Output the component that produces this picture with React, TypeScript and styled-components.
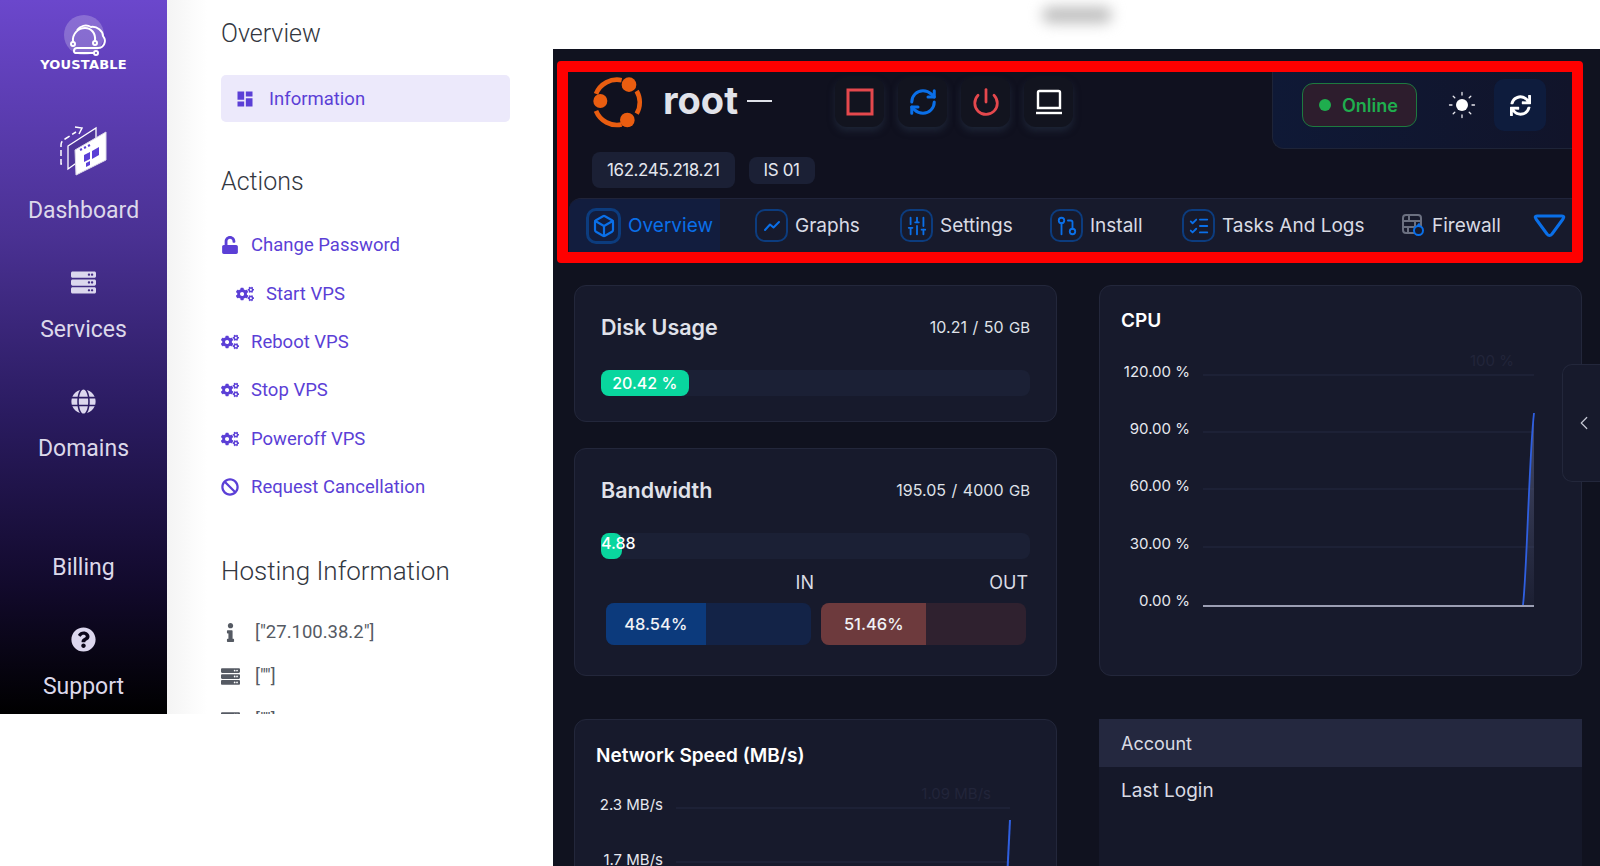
import styled, { createGlobalStyle } from 'styled-components';
import { ReactNode } from 'react';
import { Box, ChevronLeft, GitPullRequest, ListChecks, Power, RefreshCw, SlidersVertical } from 'lucide-react';
import { FaBan, FaCogs, FaGlobe, FaInfo, FaQuestionCircle, FaServer, FaSync, FaUnlock } from 'react-icons/fa';
import { MdDashboard } from 'react-icons/md';

const GlobalStyle = createGlobalStyle`
    html, body {
        margin: 0;
        padding: 0;
        background: #fff;
    }
    * {
        box-sizing: border-box;
    }
`

const Page = styled.div`
    display: flex;
    width: 1600px;
    height: 866px;
    overflow: hidden;
    position: relative;
    font-family: Roboto, "Liberation Sans", sans-serif;
`

const LeftArea = styled.div`
    display: flex;
    align-items: flex-start;
    width: 553px;
    flex-shrink: 0;
    height: 714px;
`

const Sidebar = styled.nav`
    width: 167px;
    height: 714px;
    flex-shrink: 0;
    display: flex;
    flex-direction: column;
    align-items: center;
    background: linear-gradient(180deg, #6b47cc 0%, #4a3193 33%, #2a1b60 58%, #120a2c 82%, #000 100%);
`

const LogoBlock = styled.div`
    height: 127px;
    width: 100%;
    display: flex;
    flex-direction: column;
    align-items: center;
    padding-top: 13px;
`

const LogoText = styled.div`
    font-family: "DejaVu Sans", sans-serif;
    font-weight: 700;
    font-size: 13px;
    line-height: 14px;
    color: #fff;
    letter-spacing: 0.2px;
    margin-top: 1px;
`

const NavList = styled.div`
    display: flex;
    flex-direction: column;
    align-items: center;
    gap: 45px;
`

const NavItem = styled.div`
    display: flex;
    flex-direction: column;
    align-items: center;
    gap: 22px;
`

const NavIcon = styled.div<{ $tall?: boolean }>`
    height: ${p => (p.$tall ? 48 : 24)}px;
    display: flex;
    align-items: center;
    justify-content: center;
    color: #dcd7ee;
    font-size: 25px;
`

const NavLabel = styled.div`
    font-size: 23px;
    line-height: 28px;
    color: #dcd8ea;
`

const InfoPanel = styled.div`
    flex: 1;
    height: 714px;
    overflow: hidden;
    padding: 19px 43px 0 54px;
    background: linear-gradient(90deg, #f4f4f4 0, #fff 40px);
`

const SectionTitle = styled.h3<{ $size?: number }>`
    margin: 0;
    height: 30px;
    line-height: 30px;
    font-weight: 300;
    font-size: ${p => p.$size || 25}px;
    color: #33373f;
`

const ActiveLink = styled.div`
    display: flex;
    align-items: center;
    height: 47px;
    margin: 26px 0 45px;
    padding-left: 14px;
    gap: 14px;
    border-radius: 5px;
    background: #ece9fb;
    color: #5b3fd6;
    font-size: 18.5px;
    svg {
        font-size: 20px;
    }
`

const ActionList = styled.div`
    margin: 24px 0 45px;
`

const ActionRow = styled.div<{ $indent?: boolean }>`
    display: flex;
    align-items: center;
    height: 48.4px;
    padding-left: ${p => (p.$indent ? 15 : 0)}px;
    color: #5b3fd6;
    font-size: 18.5px;
`

const ActionIcon = styled.span`
    width: 30px;
    display: flex;
    align-items: center;
    font-size: 18px;
`

const HostRows = styled.div`
    margin-top: 24px;
`

const HostRow = styled.div`
    display: flex;
    align-items: center;
    height: 44px;
    color: #555a63;
    font-size: 18.5px;
`

const HostIcon = styled.span`
    width: 34px;
    display: flex;
    justify-content: flex-start;
    padding-left: 0;
    font-size: 19px;
`

const Content = styled.div`
    flex: 1;
    display: flex;
    flex-direction: column;
    min-width: 0;
`

const TopStrip = styled.div`
    height: 49px;
    background: #fff;
    display: flex;
    justify-content: center;
    align-items: center;
    padding-bottom: 20px;
`

const BlurredName = styled.div`
    width: 70px;
    height: 16px;
    border-radius: 8px;
    background: #bdbdbd;
    filter: blur(7px);
`

const Main = styled.main`
    flex: 1;
    background: #10121f;
    padding: 12px 17px 0 4px;
    overflow: hidden;
`

const HeaderFrame = styled.header`
    border: 11px solid #ff0000;
    border-radius: 4px;
    height: 202px;
    overflow: hidden;
    background: #10111f;
    display: flex;
    flex-direction: column;
`

const TopRow = styled.div`
    height: 81px;
    display: flex;
    align-items: flex-start;
    padding-left: 24px;
`

const ServerLogo = styled.svg`
    width: 56px;
    height: 56px;
    margin-top: 3px;
    flex-shrink: 0;
`

const ServerName = styled.div`
    font-family: Inter, sans-serif;
    font-size: 38px;
    font-weight: 700;
    line-height: 56px;
    color: #e1e3ea;
    margin: 0 0 0 15px;
    width: 82px;
`

const Dash = styled.div`
    width: 25px;
    height: 2px;
    background: #dfe1e8;
    margin: 28px 63px 0 2px;
`

const ActionButtons = styled.div`
    display: flex;
    gap: 14px;
    margin-top: 5px;
`

const PowerButton = styled.button<{ $color: string }>`
    width: 49px;
    height: 50px;
    padding: 0;
    border: none;
    border-radius: 12px;
    background: #12141f;
    color: ${p => p.$color};
    box-shadow: 0 4px 7px rgba(40, 52, 72, 0.55);
    display: flex;
    align-items: center;
    justify-content: center;
`

const StatusWidget = styled.div`
    margin-left: auto;
    width: 300px;
    height: 77px;
    display: flex;
    align-items: center;
    padding: 0 0 10px 29px;
    border-left: 1px solid #1e2438;
    border-bottom: 1px solid #1e2438;
    border-bottom-left-radius: 12px;
    background: linear-gradient(90deg, #0f1936, #11142a);
`

const OnlinePill = styled.div`
    width: 115px;
    height: 44px;
    display: flex;
    align-items: center;
    gap: 11px;
    padding-left: 16px;
    border: 1px solid #1d7a3f;
    border-radius: 11px;
    background: #2d1d2d;
    font-family: Inter, sans-serif;
    font-size: 18px;
    font-weight: 600;
    color: #1fae4e;
`

const GreenDot = styled.span`
    width: 12px;
    height: 12px;
    border-radius: 50%;
    background: #1fae4e;
`

const SunIcon = styled.svg`
    width: 28px;
    height: 28px;
    margin: 0 18px 0 31px;
`

const RefreshButton = styled.div`
    width: 52px;
    height: 52px;
    border-radius: 10px;
    background: #0e1c3d;
    color: #fff;
    display: flex;
    align-items: center;
    justify-content: center;
    font-size: 21px;
`

const ChipRow = styled.div`
    height: 46px;
    display: flex;
    align-items: center;
    gap: 14px;
    padding: 0 0 10px 24px;
`

const Chip = styled.div<{ $small?: boolean }>`
    height: ${p => (p.$small ? 27 : 36)}px;
    padding: 0 15px;
    display: flex;
    align-items: center;
    border-radius: 8px;
    background: #1b2035;
    color: #e4e6ee;
    font-family: Inter, sans-serif;
    font-size: 17px;
    letter-spacing: -0.4px;
`

const TabBar = styled.div`
    height: 54px;
    margin-left: 1px;
    display: flex;
    align-items: center;
    border-top: 1px solid #20243a;
    border-top-left-radius: 12px;
    background: #171a2c;
    overflow: hidden;
`

const Tab = styled.div<{ $active?: boolean; $width: number }>`
    flex-shrink: 0;
    width: ${p => p.$width}px;
    height: 100%;
    display: flex;
    align-items: center;
    gap: 7px;
    padding-left: ${p => (p.$active ? 17 : 0)}px;
    background: ${p => (p.$active ? '#121d3e' : 'transparent')};
    color: ${p => (p.$active ? '#0a6fe8' : '#d9dbe4')};
    font-family: Inter, sans-serif;
    font-size: 19px;
`

const TabIcon = styled.span<{ $active?: boolean }>`
    width: ${p => (p.$active ? 35 : 33)}px;
    height: ${p => (p.$active ? 36 : 33)}px;
    flex-shrink: 0;
    display: flex;
    align-items: center;
    justify-content: center;
    border: ${p => (p.$active ? 3 : 2)}px solid #0c3c7e;
    border-radius: 10px;
    color: #0a6fe8;
`

const Dropdown = styled.svg`
    width: 33px;
    height: 24px;
    margin-left: 37px;
    flex-shrink: 0;
`

const Dashboard = styled.div`
    display: grid;
    grid-template-columns: 483px 483px;
    column-gap: 42px;
    row-gap: 43px;
    margin: 22px 0 0 17px;
`

const LeftStack = styled.div`
    display: flex;
    flex-direction: column;
    gap: 26px;
`

const Card = styled.section<{ $height?: number }>`
    height: ${p => (p.$height ? `${p.$height}px` : 'auto')};
    border: 1px solid #23273b;
    border-radius: 12px;
    background: #171a2c;
    color: #e2e4ec;
    font-family: Inter, sans-serif;
`

const MeterCard = styled(Card)`
    padding: 26px 26px 0;
`

const MeterHead = styled.div<{ $bottom: number }>`
    display: flex;
    justify-content: space-between;
    align-items: center;
    height: 30px;
    margin-bottom: ${p => p.$bottom}px;
`

const MeterTitle = styled.div`
    font-size: 21.5px;
    font-weight: 600;
    color: #e0e2ea;
`

const MeterValue = styled.div`
    font-size: 16px;
    color: #dfe1e8;
    word-spacing: 1px;
    small {
        font-size: 15px;
    }
`

const Track = styled.div`
    height: 26px;
    border-radius: 8px;
    background: #1b2035;
    display: flex;
`

const TrackFill = styled.div`
    height: 100%;
    flex-shrink: 0;
    border-radius: 8px;
    background: #09d69e;
    color: #fff;
    font-size: 16px;
    font-weight: 500;
    line-height: 20px;
    text-align: center;
`

const TinyFill = styled(TrackFill)`
    overflow: visible;
    width: 21px;
    text-align: left;
    white-space: nowrap;
`

const SplitLabels = styled.div`
    display: flex;
    height: 24px;
    margin-top: 12px;
    font-size: 18px;
    line-height: 24px;
    color: #d9dbe4;
`

const InLabel = styled.div`
    width: 213px;
    text-align: right;
`

const OutLabel = styled.div`
    width: 214px;
    text-align: right;
`

const SplitBars = styled.div`
    display: flex;
    gap: 10px;
    margin: 8px 0 0 5px;
`

const Split = styled.div<{ $base: string }>`
    width: 205px;
    height: 42px;
    border-radius: 8px;
    overflow: hidden;
    background: ${p => p.$base};
`

const SplitFill = styled.div<{ $color: string }>`
    height: 100%;
    display: flex;
    align-items: center;
    justify-content: center;
    background: ${p => p.$color};
    color: #f1f2f6;
    font-size: 16.5px;
    font-weight: 500;
`

const ChartTitle = styled.div<{ $left: number; $top: number; $height: number }>`
    padding: ${p => p.$top}px 0 0 ${p => p.$left}px;
    height: ${p => p.$height}px;
    font-size: 19px;
    line-height: 24px;
    font-weight: 600;
    color: #fff;
`

const ChartSvg = styled.svg`
    display: block;
    font-family: Inter, sans-serif;
    font-size: 15px;
`

const AccountCard = styled.section`
    background: #151829;
    font-family: Inter, sans-serif;
    height: 200px;
`

const AccountHead = styled.div`
    height: 48px;
    padding-left: 22px;
    display: flex;
    align-items: center;
    background: #24283f;
    color: #d9dbe4;
    font-size: 18px;
`

const AccountRow = styled.div`
    padding: 10px 0 0 22px;
    line-height: 28px;
    font-size: 19px;
    color: #d9dbe4;
`

const SideToggle = styled.div`
    position: absolute;
    right: 0;
    top: 364px;
    width: 38px;
    height: 118px;
    display: flex;
    align-items: center;
    padding-left: 10px;
    border: 1px solid #23273b;
    border-right: none;
    border-radius: 10px 0 0 10px;
    background: #171a2c;
    color: #c5c8d4;
`

function SidebarLogo() {
    return (
        <svg width="60" height="44" viewBox="44 13 60 44" fill="none" stroke="#fff" strokeWidth="2">
            <circle cx="74" cy="35" r="20" fill="rgba(255,255,255,0.22)" stroke="none" />
            <path d="M63 42C62 33 69 28 75 28C81 28 86 33 85 41" />
            <circle cx="63" cy="44" r="2" />
            <circle cx="85" cy="43" r="2" />
            <path d="M67 30C70 26 76 24 81 27C87 26 93 31 93 36C97 41 94 48 88 48H67C63 48 63 54 67 53H84" />
            <circle cx="86" cy="53" r="2" />
        </svg>
    );
}

function DashboardArt() {
    return (
        <svg width="50" height="50" viewBox="51 126 50 50" fill="none" stroke="#fff">
            <path d="M54 164H53V145Q53 141 57 139L68 132" strokeWidth="1.5" strokeDasharray="6 3" />
            <path d="M67 127L74 128L71 134" strokeWidth="1.5" />
            <path d="M60 146L88 128V149L60 169Z" strokeWidth="1.3" fill="#4f3699" />
            <path d="M67 150L98 132V160L68 175Z" fill="#fff" stroke="#dcd8ea" strokeWidth="1" />
            <path d="M72 150l2-1M76 148l2-1M80 146l2-1" stroke="#5b3fd6" strokeWidth="2" />
            <path d="M76 155l6-3v7l-6 3zM84 151l7-4v8l-7 4zM78 163l4-2v4l-4 2z" fill="#5b3fd6" stroke="none" />
        </svg>
    );
}

function UbuntuMark() {
    return (
        <ServerLogo viewBox="122 70 168 168" fill="#e95d10" stroke="none">
            <circle cx="233" cy="99" r="22" />
            <circle cx="147" cy="148" r="21" />
            <circle cx="228" cy="205" r="22" />
            <g fill="none" stroke="#e95d10" strokeWidth="14">
                <path d="M256 118A68 68 0 0 1 256 186" />
                <path d="M211 218.5A68 68 0 0 1 134 177.5" />
                <path d="M134 126.5A68 68 0 0 1 211 85.5" />
            </g>
        </ServerLogo>
    );
}

function Sun() {
    return (
        <SunIcon viewBox="0 0 28 28" stroke="#e8e8ee" strokeWidth="1.3" strokeLinecap="round">
            <circle cx="14" cy="14" r="6" fill="#fff" stroke="none" />
            <path d="M14 1.5v2.5M14 24v2.5M1.5 14H4M24 14h2.5M5.2 5.2l1.6 1.6M21.2 21.2l1.6 1.6M5.2 22.8l1.6-1.6M21.2 6.8l1.6-1.6" />
        </SunIcon>
    );
}

function FirewallIcon() {
    return (
        <svg width="23" height="23" viewBox="0 0 23 23" fill="none" style={{ flexShrink: 0 }}>
            <rect x="1" y="1" width="18" height="18" rx="3" stroke="#6b7080" strokeWidth="2" />
            <path d="M1 7H19M1 13H12M7 1V7M13 7V13M6 13V19" stroke="#6b7080" strokeWidth="2" />
            <circle cx="16.5" cy="16.5" r="4.5" fill="#171a2c" stroke="#0a6fe8" strokeWidth="2" />
            <path d="M15 12l2-2 1 3" stroke="#0a6fe8" strokeWidth="1.5" />
        </svg>
    );
}

function GraphIcon() {
    return (
        <svg width="18" height="18" viewBox="0 0 18 18" fill="none" stroke="#0a6fe8" strokeWidth="2" strokeLinecap="round" strokeLinejoin="round">
            <path d="M2 13L7 7.5L10.5 10.5L16 5" />
        </svg>
    );
}

function LaptopIcon() {
    return (
        <svg width="28" height="26" viewBox="0 0 28 26" fill="none" stroke="#fff" strokeWidth="2.4">
            <path d="M3 19V3.5Q3 2 4.500 2H23.500Q25 2 25 3.500V19Z" />
            <path d="M1 24H27" />
        </svg>
    );
}

function CpuChart() {
    const labels = [['120.00 %', 31], ['90.00 %', 88], ['60.00 %', 145], ['30.00 %', 203], ['0.00 %', 260]] as const;
    return (
        <ChartSvg width="481" height="300" viewBox="0 0 481 300">
            <defs>
                <linearGradient id="cpuArea" x1="0" y1="0" x2="0" y2="1">
                    <stop offset="0" stopColor="#4a5070" stopOpacity="0.9" />
                    <stop offset="1" stopColor="#4a5070" stopOpacity="0.1" />
                </linearGradient>
            </defs>
            <text x="414" y="20" textAnchor="end" fill="#22253a" fontSize="15">100 %</text>
            {[29, 86, 143, 201].map(y => (
                <line key={y} x1="103" x2="434" y1={y} y2={y} stroke="#252940" />
            ))}
            {labels.map(([text, y]) => (
                <text key={text} x="90" y={y} textAnchor="end" fill="#e6e8ef">{text}</text>
            ))}
            <path d="M423 259C427 225 429 110 434 67V259Z" fill="url(#cpuArea)" />
            <path d="M423 259C427 225 429 110 434 67" fill="none" stroke="#2f5fe0" strokeWidth="1.800" />
            <line x1="103" x2="434" y1="260" y2="260" stroke="#c8cbe0" strokeWidth="1.500" />
        </ChartSvg>
    );
}

function NetworkChart() {
    return (
        <ChartSvg width="481" height="100" viewBox="0 0 481 100">
            <text x="416" y="19" textAnchor="end" fill="#22253a">1.09 MB/s</text>
            <line x1="101" x2="435" y1="28" y2="28" stroke="#252940" />
            <line x1="101" x2="435" y1="82" y2="82" stroke="#252940" />
            <text x="88" y="30" textAnchor="end" fill="#e6e8ef">2.3 MB/s</text>
            <text x="88" y="85" textAnchor="end" fill="#e6e8ef">1.7 MB/s</text>
            <path d="M432 100C433 80 434 60 435 40" fill="none" stroke="#2f5fe0" strokeWidth="2" />
        </ChartSvg>
    );
}

const navItems: { label: string; icon?: ReactNode }[] = [
    { label: 'Services', icon: <FaServer /> },
    { label: 'Domains', icon: <FaGlobe /> },
    { label: 'Billing' },
    { label: 'Support', icon: <FaQuestionCircle /> },
];

const actions = [
    { label: 'Change Password', icon: <FaUnlock /> },
    { label: 'Start VPS', icon: <FaCogs />, indent: true },
    { label: 'Reboot VPS', icon: <FaCogs /> },
    { label: 'Stop VPS', icon: <FaCogs /> },
    { label: 'Poweroff VPS', icon: <FaCogs /> },
    { label: 'Request Cancellation', icon: <FaBan /> },
];

const tabs = [
    { label: 'Graphs', width: 145, icon: <GraphIcon /> },
    { label: 'Settings', width: 150, icon: <SlidersVertical size={22} strokeWidth={2} /> },
    { label: 'Install', width: 132, icon: <GitPullRequest size={22} strokeWidth={2} /> },
];

export default function App() {
    return (
        <Page>
            <GlobalStyle />
            <LeftArea>
                <Sidebar>
                    <LogoBlock>
                        <SidebarLogo />
                        <LogoText>YOUSTABLE</LogoText>
                    </LogoBlock>
                    <NavList>
                        <NavItem>
                            <NavIcon $tall><DashboardArt /></NavIcon>
                            <NavLabel>Dashboard</NavLabel>
                        </NavItem>
                        {navItems.map(item => (
                            <NavItem key={item.label}>
                                <NavIcon>{item.icon}</NavIcon>
                                <NavLabel>{item.label}</NavLabel>
                            </NavItem>
                        ))}
                    </NavList>
                </Sidebar>
                <InfoPanel>
                    <SectionTitle>Overview</SectionTitle>
                    <ActiveLink><MdDashboard />Information</ActiveLink>
                    <SectionTitle>Actions</SectionTitle>
                    <ActionList>
                        {actions.map(action => (
                            <ActionRow key={action.label} $indent={action.indent}>
                                <ActionIcon>{action.icon}</ActionIcon>
                                {action.label}
                            </ActionRow>
                        ))}
                    </ActionList>
                    <SectionTitle $size={26}>Hosting Information</SectionTitle>
                    <HostRows>
                        <HostRow><HostIcon><FaInfo /></HostIcon>["27.100.38.2"]</HostRow>
                        <HostRow><HostIcon><FaServer /></HostIcon>[""]</HostRow>
                        <HostRow><HostIcon><FaServer /></HostIcon>[""]</HostRow>
                    </HostRows>
                </InfoPanel>
            </LeftArea>
            <Content>
                <TopStrip><BlurredName /></TopStrip>
                <Main>
                    <HeaderFrame>
                        <TopRow>
                            <UbuntuMark />
                            <ServerName>root</ServerName>
                            <Dash />
                            <ActionButtons>
                                <PowerButton $color="#e5484d">
                                    <svg width="28" height="28" viewBox="0 0 28 28" fill="none" stroke="currentColor" strokeWidth="3"><rect x="2" y="2" width="24" height="24" /></svg>
                                </PowerButton>
                                <PowerButton $color="#0a6fe8"><RefreshCw size={30} strokeWidth={2.4} /></PowerButton>
                                <PowerButton $color="#e5484d"><Power size={30} strokeWidth={2.2} /></PowerButton>
                                <PowerButton $color="#fff"><LaptopIcon /></PowerButton>
                            </ActionButtons>
                            <StatusWidget>
                                <OnlinePill><GreenDot />Online</OnlinePill>
                                <Sun />
                                <RefreshButton><FaSync /></RefreshButton>
                            </StatusWidget>
                        </TopRow>
                        <ChipRow>
                            <Chip>162.245.218.21</Chip>
                            <Chip $small>IS 01</Chip>
                        </ChipRow>
                        <TabBar>
                            <Tab $active $width={151} $padded={false as never}>
                                <TabIcon $active><Box size={24} strokeWidth={2.200} /></TabIcon>
                                Overview
                            </Tab>
                            <Tab $width={35} />
                            {tabs.map(tab => (
                                <Tab key={tab.label} $width={tab.width}>
                                    <TabIcon>{tab.icon}</TabIcon>
                                    {tab.label}
                                </Tab>
                            ))}
                            <Tab $width={220}>
                                <TabIcon><ListChecks size={22} strokeWidth={2} /></TabIcon>
                                Tasks And Logs
                            </Tab>
                            <Tab $width={94}>
                                <FirewallIcon />
                                Firewall
                            </Tab>
                            <Dropdown viewBox="0 0 33 24" fill="none" stroke="#0a6fe8" strokeWidth="3" strokeLinejoin="round">
                                <path d="M4 2H29Q32 2 30 5L19 20Q16.500 23 14 20L3 5Q1 2 4 2Z" />
                            </Dropdown>
                        </TabBar>
                    </HeaderFrame>
                    <Dashboard>
                        <LeftStack>
                            <MeterCard $height={137}>
                                <MeterHead $bottom={28}>
                                    <MeterTitle>Disk Usage</MeterTitle>
                                    <MeterValue>10.21 / 50 <small>GB</small></MeterValue>
                                </MeterHead>
                                <Track>
                                    <TrackFill style={{ width: '20.42%', lineHeight: '26px' }}>20.42 %</TrackFill>
                                </Track>
                            </MeterCard>
                            <MeterCard $height={228}>
                                <MeterHead $bottom={28}>
                                    <MeterTitle>Bandwidth</MeterTitle>
                                    <MeterValue>195.05 / 4000 <small>GB</small></MeterValue>
                                </MeterHead>
                                <Track>
                                    <TinyFill>4.88</TinyFill>
                                </Track>
                                <SplitLabels>
                                    <InLabel>IN</InLabel>
                                    <OutLabel>OUT</OutLabel>
                                </SplitLabels>
                                <SplitBars>
                                    <Split $base="#132347">
                                        <SplitFill $color="#0c3a7c" style={{ width: '48.54%' }}>48.54%</SplitFill>
                                    </Split>
                                    <Split $base="#2f212f">
                                        <SplitFill $color="#6d3a3d" style={{ width: '51.46%' }}>51.46%</SplitFill>
                                    </Split>
                                </SplitBars>
                            </MeterCard>
                        </LeftStack>
                        <Card>
                            <ChartTitle $left={21} $top={23} $height={60}>CPU</ChartTitle>
                            <CpuChart />
                        </Card>
                        <Card $height={200}>
                            <ChartTitle $left={21} $top={24} $height={60}>Network Speed (MB/s)</ChartTitle>
                            <NetworkChart />
                        </Card>
                        <AccountCard>
                            <AccountHead>Account</AccountHead>
                            <AccountRow>Last Login</AccountRow>
                        </AccountCard>
                    </Dashboard>
                </Main>
            </Content>
            <SideToggle><ChevronLeft size={22} strokeWidth={1.300} /></SideToggle>
        </Page>
    );
}
